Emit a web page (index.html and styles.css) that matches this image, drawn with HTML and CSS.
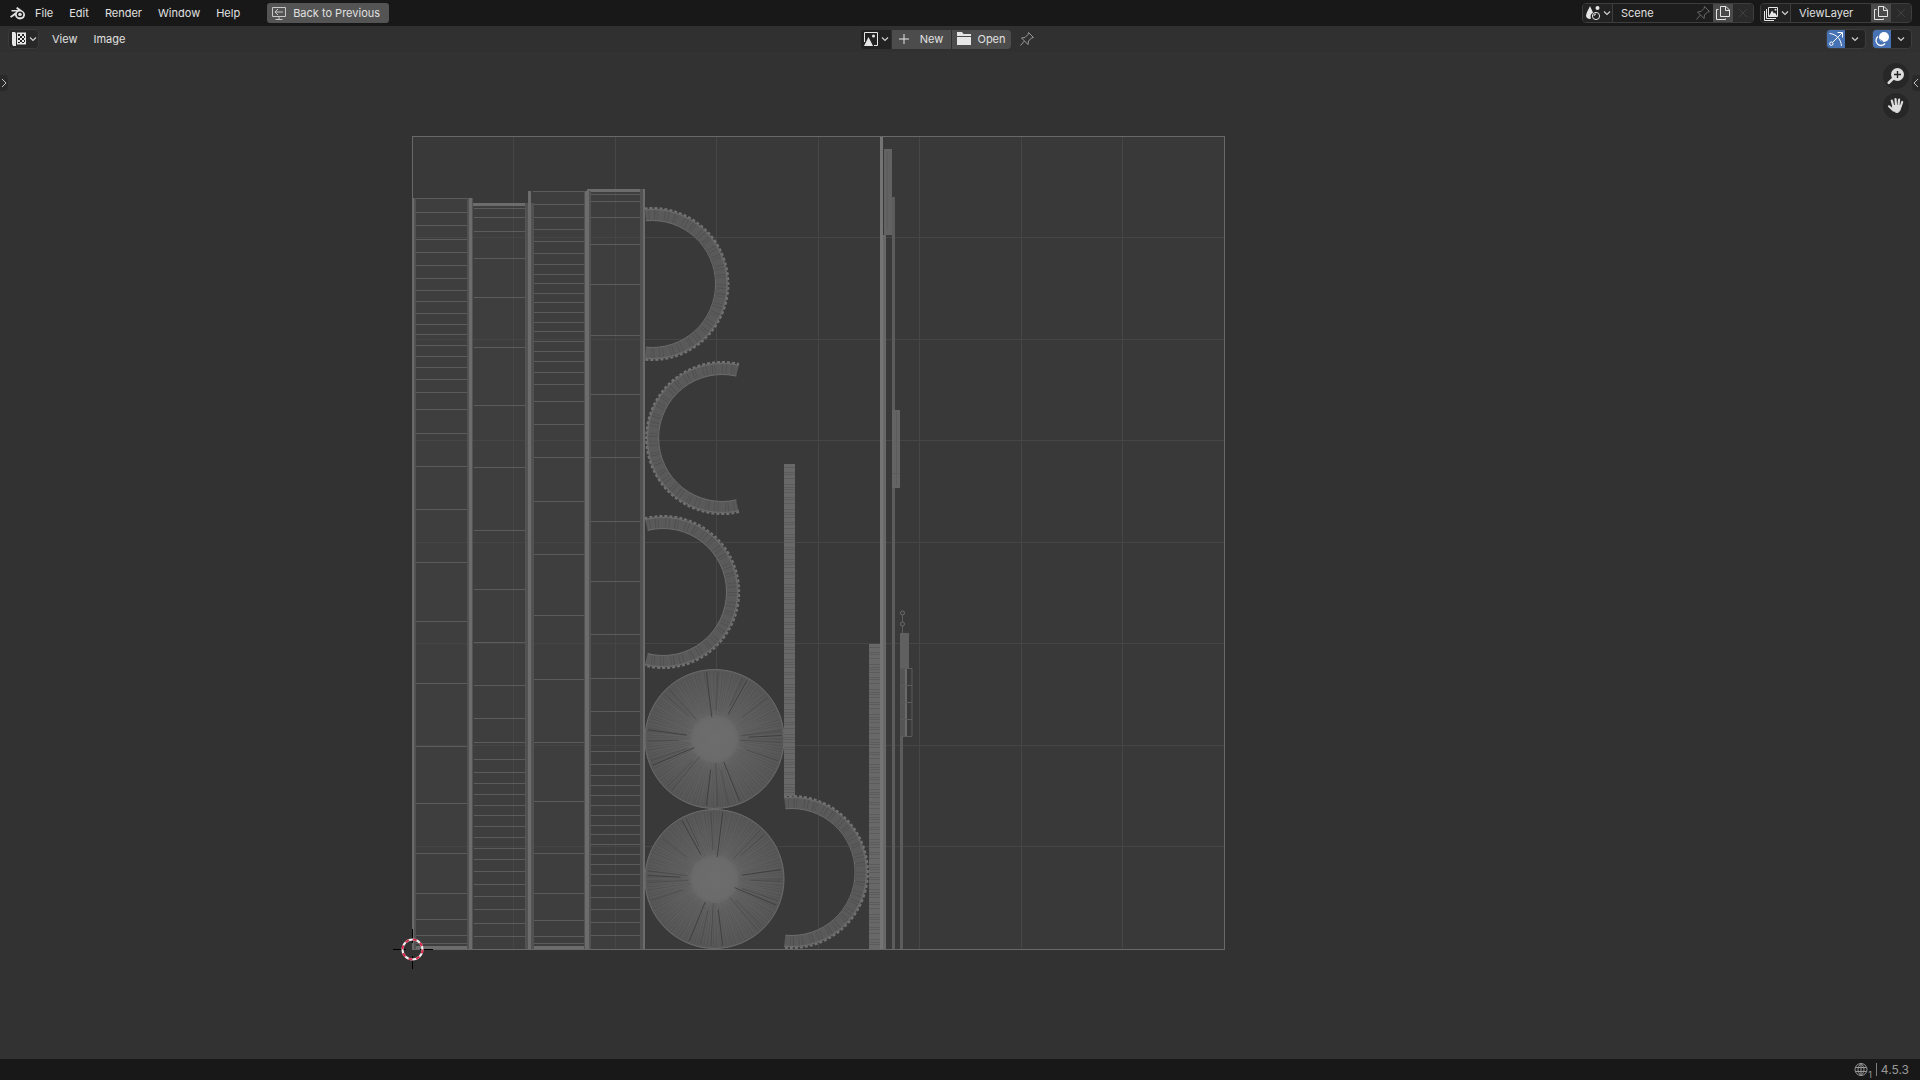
FILE: index.html
```html
<!DOCTYPE html>
<html lang="en">
  <head>
    <meta charset="UTF-8" />
    <meta name="viewport" content="width=device-width,initial-scale=1.0" />
    <title>Blender</title>
    <link rel="stylesheet" href="styles.css">
  </head>
  <body>
    <header class="topbar">
      <svg class="logo" viewBox="0 0 18 16">
        <path d="M1 11.5 7.500 6.500H2.500V5H9L7 3.200 8.300 2 14.500 6.600A5 4.600 0 1 1 6 10.200L2.200 12.800z" fill="#e0e0e0"/>
        <ellipse cx="11" cy="9.400" rx="3.200" ry="2.900" fill="#181818"/>
        <ellipse cx="11" cy="9.400" rx="1.800" ry="1.600" fill="#e0e0e0"/>
      </svg>
      <nav class="menu">
        <button>File</button>
        <button>Edit</button>
        <button>Render</button>
        <button>Window</button>
        <button>Help</button>
      </nav>
      <button class="back-button">
        <svg class="icon" viewBox="0 0 16 16">
          <path d="M1.500 2.500h13v9h-13zM8 11.500v3M4.500 14.500h7M12 7H4M7 4 4 7l3 3" fill="none" stroke="#c8c8c8"/>
        </svg>
        Back to Previous
      </button>
      <div class="topbar-right">
        <div class="id-field">
          <button class="picker" aria-label="Browse scene">
            <svg class="icon" viewBox="0 0 16 16">
              <path d="M5 1C4 4 1 7.500 1 11a3.500 3.500 0 0 0 5 2.500A5 5 0 0 1 8 7.500C7 5 5.700 3 5 1z" fill="#e6e6e6"/>
              <circle cx="12.500" cy="3" r="2" fill="#e6e6e6"/>
              <circle cx="11" cy="11" r="3.600" fill="none" stroke="#e6e6e6"/>
              <path d="M9 11a2 2 0 0 1 2-2" fill="none" stroke="#e6e6e6"/>
            </svg>
            <svg class="caret" viewBox="0 0 8 8"><path d="M1 2.500l3 3 3-3"/></svg>
          </button>
          <input class="scene-name" type="text" value="Scene" aria-label="Scene name">
          <button class="pin dim" aria-label="Pin scene">
            <svg class="icon" viewBox="0 0 16 16"><path d="M9.500 1.500l5 5-2 .5-3 3-.5 3.500L2.500 7 6 6.500l3-3zM5.500 10 1.500 14.500"/></svg>
          </button>
          <button class="copy" aria-label="New scene">
            <svg class="icon" viewBox="0 0 16 16"><path d="M5.500 1.500H11L14.500 5v6.500h-9zM10.500 1.500v4h4M3.500 4.500h-2v10h9v-1"/></svg>
          </button>
          <button class="remove" aria-label="Delete scene">
            <svg class="icon" viewBox="0 0 16 16"><path d="M4 4l8 8M12 4l-8 8"/></svg>
          </button>
        </div>
        <div class="id-field">
          <button class="picker" aria-label="Browse view layer">
            <svg class="icon" viewBox="0 0 16 16">
              <path d="M5.500 2.500h9v9h-9zM3.500 4v9.500H13M1.500 6v9.500H11" fill="none" stroke="#e6e6e6"/>
              <path d="M6 11 9 5.500l2 3 1-1 2 3.500z" fill="#e6e6e6"/>
              <circle cx="12.500" cy="4.700" r="1" fill="#e6e6e6"/>
            </svg>
            <svg class="caret" viewBox="0 0 8 8"><path d="M1 2.500l3 3 3-3"/></svg>
          </button>
          <input class="layer-name" type="text" value="ViewLayer" aria-label="View layer name">
          <button class="copy" aria-label="New view layer">
            <svg class="icon" viewBox="0 0 16 16"><path d="M5.500 1.500H11L14.500 5v6.500h-9zM10.500 1.500v4h4M3.500 4.500h-2v10h9v-1"/></svg>
          </button>
          <button class="remove" aria-label="Remove view layer">
            <svg class="icon" viewBox="0 0 16 16"><path d="M4 4l8 8M12 4l-8 8"/></svg>
          </button>
        </div>
      </div>
    </header>

    <div class="editor-header">
      <div class="header-left">
        <button class="editor-type" aria-label="Editor type">
          <svg class="icon" viewBox="0 0 16 16">
            <path d="M1 1h3l1 1.500V15l-1 0H2L1 13z" fill="#e6e6e6"/>
            <path d="M6 1.500h9v12H6z" fill="#e6e6e6"/>
            <path d="M7 3h2v2H7zM11 3h2v2h-2zM9 5h2v2H9zM13 5h1v2h-1zM7 7h2v2H7zM11 7h2v2h-2zM9 9h2v2H9zM13 9h1v2h-1zM7 11h2v1H7zM11 11h2v1h-2z" fill="#222"/>
          </svg>
          <svg class="caret" viewBox="0 0 8 8"><path d="M1 2.500l3 3 3-3"/></svg>
        </button>
        <nav class="menu">
          <button>View</button>
          <button>Image</button>
        </nav>
      </div>
      <div class="header-center">
        <div class="image-block">
          <button class="picker" aria-label="Browse image">
            <svg class="icon" viewBox="0 0 16 16">
              <path d="M8 1.500H1.500V11M11 14.500h3.500V1.500H8" fill="none" stroke="#e6e6e6"/>
              <path d="M1 15 5.500 6 10 15z" fill="#e6e6e6"/>
              <circle cx="10.500" cy="5" r="1.500" fill="#e6e6e6"/>
            </svg>
            <svg class="caret" viewBox="0 0 8 8"><path d="M1 2.500l3 3 3-3"/></svg>
          </button>
          <button class="action">
            <svg class="icon" viewBox="0 0 16 16"><path d="M8 3v10M3 8h10" stroke="#e6e6e6"/></svg>
            <span>New</span>
          </button>
          <button class="action">
            <svg class="icon" viewBox="0 0 16 16"><path d="M1 1h5l1.500 2H15v2H1zM1 6h14v8H1z" fill="#e6e6e6"/></svg>
            <span>Open</span>
          </button>
        </div>
        <button class="pin" aria-label="Pin image">
          <svg class="icon" viewBox="0 0 16 16"><path d="M9.500 1.500l5 5-2 .5-3 3-.5 3.500L2.500 7 6 6.500l3-3zM5.500 10 1.500 14.500"/></svg>
        </button>
      </div>
      <div class="header-right">
        <div class="toggle">
          <button class="toggle-on" aria-label="Show gizmos">
            <svg class="icon" viewBox="0 0 16 16" fill="none" stroke="#fff">
              <path d="M1.500 2.500C8 3 13 8 13.500 15M4.500 11.500 14 2M9.500 1.500h5v5"/>
              <circle cx="3.300" cy="12.700" r="1.700"/>
            </svg>
          </button>
          <button class="toggle-more" aria-label="Gizmo options"><svg class="caret" viewBox="0 0 8 8"><path d="M1 2.500l3 3 3-3"/></svg></button>
        </div>
        <div class="toggle">
          <button class="toggle-on" aria-label="Show overlays">
            <svg class="icon" viewBox="0 0 16 16">
              <circle cx="10" cy="6" r="5" fill="#fff"/>
              <path d="M4 5.500a5 5 0 1 0 7 7" fill="none" stroke="#fff" stroke-width="1.300"/>
              <path d="M6.500 8.500a5 5 0 0 0 2.500 2" fill="none" stroke="#4772b3"/>
            </svg>
          </button>
          <button class="toggle-more" aria-label="Overlay options"><svg class="caret" viewBox="0 0 8 8"><path d="M1 2.500l3 3 3-3"/></svg></button>
        </div>
      </div>
    </div>

    <main class="viewport">
      <svg class="uv-canvas" viewBox="0 52 1920 1007" role="img" aria-label="UV layout">
        <defs>
          <radialGradient id="fan">
            <stop offset="0" stop-color="#6d6d6d"/>
            <stop offset="0.28" stop-color="#6b6b6b"/>
            <stop offset="0.45" stop-color="#626262"/>
            <stop offset="1" stop-color="#575757"/>
          </radialGradient>
        </defs>
        <rect x="412" y="136" width="813" height="813" fill="#393939"/>
        <g id="grid"></g>
        <g id="mesh"></g>
        <rect class="bounds" x="412.500" y="136.500" width="812" height="813"/>
        <g class="cursor">
          <path d="M393 949.500h13M420 949.500h13M412.500 929v14M412.500 956v13" stroke="#000"/>
          <circle cx="412.500" cy="949.500" r="10" stroke="#f0f0f0"/>
          <circle cx="412.500" cy="949.500" r="10" stroke="#d8284a" stroke-dasharray="3.930 3.930"/>
        </g>
      </svg>
      <button class="side-tab side-left" aria-label="Show toolbar"><svg viewBox="0 0 8 12"><path d="M2 2l4 4-4 4"/></svg></button>
      <button class="side-tab side-right" aria-label="Show sidebar"><svg viewBox="0 0 8 12"><path d="M6 2 2 6l4 4"/></svg></button>
      <div class="gizmos">
        <button aria-label="Zoom">
          <svg viewBox="0 0 18 18">
            <path d="M1.800 15.800 7 10.800" stroke="#dcdcdc" stroke-width="2.600" stroke-linecap="round"/>
            <circle cx="10.500" cy="7.500" r="6.500" fill="#dcdcdc"/>
            <path d="M10.500 4v7M7 7.500h7" stroke="#222" stroke-width="1.400"/>
          </svg>
        </button>
        <button aria-label="Pan">
          <svg viewBox="0 0 18 18" fill="none" stroke="#dcdcdc" stroke-width="2.200" stroke-linecap="round">
            <path d="M6.300 9 4.800 3.600M9 8.500 8.500 2M11.500 8.500l.6-6M13.500 10l1.700-5M6.500 13.500 2 9.300"/>
            <path d="M6 8.500h7.800c0 3-.8 7-3.800 7-2 0-3-1.500-4.500-3.500z" fill="#dcdcdc" stroke-width="1"/>
          </svg>
        </button>
      </div>
    </main>

    <footer class="statusbar">
      <svg class="globe" viewBox="0 0 20 16">
        <path d="M7 1.500a6 6 0 1 0 0 12 6 6 0 1 0 0-12zM7 1.500c-4 3.500-4 8.500 0 12M7 1.500c4 3.500 4 8.500 0 12M1.500 5.500h11M1.500 9.500h11M7 1.500v12"/>
      </svg>
      <small>1</small>
      <span class="divider"></span>
      <span>4.5.3</span>
    </footer>
    <script src="script.js"></script>
  </body>
</html>
```

FILE: styles.css
```css
* {
  margin: 0;
  padding: 0;
  box-sizing: border-box;
}
body {
  font-family: "Inter", sans-serif;
  font-size: 11px;
  line-height: 16px;
  color: #e0e0e0;
  background: #303030;
  height: 100vh;
  display: flex;
  flex-direction: column;
  overflow: hidden;
}
button,
input {
  font: inherit;
  color: inherit;
  background: none;
  border: none;
}
button {
  display: flex;
  align-items: center;
  justify-content: center;
}
svg {
  display: block;
  flex: none;
}
.icon {
  width: 16px;
  height: 16px;
}
.caret {
  width: 8px;
  height: 8px;
  fill: none;
  stroke: #d0d0d0;
  stroke-width: 1.2;
}

/* top bar */
.topbar {
  height: 26px;
  background: #181818;
  display: flex;
  align-items: center;
  padding: 0 8px 0 9px;
}
.logo {
  width: 18px;
  height: 16px;
  margin-right: 8px;
}
.menu {
  display: flex;
  gap: 16px;
}
.back-button {
  height: 20px;
  margin-left: 27px;
  padding: 0 9px 0 4px;
  gap: 6px;
  border-radius: 3px;
  background: #545454;
}
.topbar-right {
  display: flex;
  gap: 6px;
  margin-left: auto;
}
.id-field {
  display: flex;
  height: 20px;
  border: 1px solid #3d3d3d;
  border-radius: 4px;
  background: #1d1d1d;
  overflow: hidden;
}
.picker {
  width: 30px;
  gap: 2px;
  background: #222;
}
.id-field .picker {
  border-right: 1px solid #3d3d3d;
}
.id-field input {
  width: 80px;
  padding-left: 8px;
  outline: none;
}
.pin svg {
  width: 16px;
  height: 16px;
  fill: none;
  stroke: #9a9a9a;
}
.pin.dim {
  width: 20px;
}
.pin.dim svg {
  stroke: #6a6a6a;
}
.copy {
  width: 20px;
  background: #4a4a4a;
}
.copy svg {
  fill: none;
  stroke: #e6e6e6;
}
.remove {
  width: 20px;
  background: #2a2a2a;
}
.remove svg {
  fill: none;
  stroke: #404040;
}

/* editor header */
.editor-header {
  height: 26px;
  background: #303030;
  display: grid;
  grid-template-columns: 1fr auto 1fr;
  align-items: center;
  padding: 0 8px;
}
.header-left,
.header-center,
.header-right,
.image-block,
.toggle {
  display: flex;
  align-items: center;
}
.editor-type {
  width: 31px;
  height: 20px;
  gap: 2px;
  margin-right: 13px;
  border: 1px solid #3a3a3a;
  border-radius: 4px;
  background: #282828;
}
.header-center {
  gap: 8px;
  padding-right: 24px;
}
.image-block {
  height: 19px;
  gap: 1px;
  border-radius: 4px;
  overflow: hidden;
}
.image-block > button {
  height: 19px;
}
.action {
  width: 59px;
  background: #4c4c4c;
  justify-content: flex-start;
  padding-left: 4px;
}
.action span {
  flex: 1;
}
.header-right {
  justify-content: flex-end;
  gap: 6px;
}
.toggle {
  height: 20px;
  border: 1px solid #3d3d3d;
  border-radius: 4px;
  background: #222;
  overflow: hidden;
}
.toggle-on {
  width: 18px;
  height: 18px;
  background: #4772b3;
}
.toggle-more {
  width: 20px;
  height: 18px;
}

/* viewport */
.viewport {
  position: relative;
  flex: 1;
  min-height: 0;
  background: #323232;
}
.uv-canvas {
  width: 100%;
  height: 100%;
}
.grid-line {
  stroke: #464646;
  fill: none;
}
.bounds {
  fill: none;
  stroke: #686868;
}
.face {
  fill: #404040;
  fill-opacity: 0.7;
}
.edge {
  fill: none;
  stroke: #5c5c5c;
}
.rail {
  fill: none;
  stroke: #525252;
}
.rail-core {
  fill: none;
  stroke: #6c6c6c;
}
.dense {
  fill: #686868;
}
.ring {
  fill: none;
  stroke: #5a5a5a;
  stroke-width: 12;
}
.ring-rim {
  fill: none;
  stroke: #6c6c6c;
}
.ring-teeth {
  fill: none;
  stroke: #727272;
  stroke-width: 2;
  stroke-dasharray: 3 2;
}
.ring-cuts {
  fill: none;
  stroke: #404040;
  stroke-width: 10;
  stroke-opacity: 0.5;
}
.spoke {
  stroke: #383838;
}
.rays {
  fill: none;
  stroke: #484848;
  stroke-opacity: 0.45;
  stroke-width: 44;
}
.cursor {
  fill: none;
}
.cursor circle {
  stroke-width: 2;
}
.side-tab {
  position: absolute;
  top: 23px;
  width: 8px;
  height: 16px;
  background: #292929;
}
.side-tab svg {
  width: 8px;
  height: 12px;
  fill: none;
  stroke: #c0c0c0;
}
.side-left {
  left: 0;
  border-radius: 0 4px 4px 0;
}
.side-right {
  right: 0;
  border-radius: 4px 0 0 4px;
}
.gizmos {
  position: absolute;
  top: 11px;
  right: 11px;
  display: flex;
  flex-direction: column;
  gap: 4px;
}
.gizmos button {
  width: 26px;
  height: 26px;
  border-radius: 50%;
  background: #272727;
}
.gizmos svg {
  width: 18px;
  height: 18px;
}

/* status bar */
.statusbar {
  height: 21px;
  background: #181818;
  display: flex;
  align-items: center;
  justify-content: flex-end;
  padding-right: 11px;
  font-size: 12px;
  color: #989898;
}
.globe {
  width: 20px;
  height: 16px;
  margin-right: -6px;
  fill: none;
  stroke: #989898;
}
.statusbar small {
  font-size: 9px;
  line-height: 10px;
  align-self: flex-end;
}
.divider {
  width: 1px;
  height: 13px;
  margin: 0 4px;
  background: #808080;
}
```

FILE: script.js
```js
const NS = 'http://www.w3.org/2000/svg';
const grid = document.getElementById('grid');
const mesh = document.getElementById('mesh');

function add(parent, tag, cls, attrs) {
  const el = document.createElementNS(NS, tag);
  el.setAttribute('class', cls);
  for (const k in attrs) el.setAttribute(k, attrs[k]);
  parent.appendChild(el);
}

// 8x8 grid
let d = '';
for (let i = 1; i < 8; i++) {
  const p = Math.floor(i * 101.5);
  d += `M${412.5 + p} 137V949M413 ${136.5 + p}H1224`;
}

// long strips: x range, top, cross edges
const strips = [
  { x: 413, r: 470, top: 198, rows: [198,212,225,239,252,265,278,290,301,313,324,334,345,356,367,379,392,409,433,466,509,562,621,683,746,803,853,893,919,935,943] },
  { x: 471, r: 529, top: 203, rows: [208,217,231,258,297,347,405,467,530,589,642,685,718,742,759,772,783,794,805,815,826,837,848,859,871,884,896,909,923,936] },
  { x: 530, r: 586, top: 191, rows: [191,204,217,229,241,253,264,274,283,293,302,312,322,331,341,351,361,372,384,401,424,457,501,554,615,679,742,801,853,893,920,936,943] },
  { x: 587, r: 645, top: 189, rows: [194,201,217,244,284,335,394,457,521,581,634,678,711,735,751,764,775,785,795,805,815,825,834,844,854,864,874,885,897,909,922,935] }
];
strips.forEach(s => {
  add(mesh, 'rect', 'face', { x: s.x, y: s.top, width: s.r - s.x, height: 949 - s.top });
});
add(mesh, 'path', 'grid-line', { d });
strips.forEach((s, i) => {
  add(mesh, 'path', 'edge', { d: s.rows.map(y => `M${s.x + 3} ${y + 0.5}H${s.r - 2}`).join('') });
  // strips 2 and 4 are capped at the top, 1 and 3 at the bottom
  const cap = i % 2 ? s.top + 1.5 : 947.5;
  add(mesh, 'path', 'rail-core', { d: `M${s.x} ${cap}H${s.r}`, 'stroke-width': 3 });
});
// shared borders: x, top, full width, bright core x and width
[
  [412, 198, 4, 412, 2], [467, 198, 6, 469, 3], [525, 203, 9, 528, 3],
  [584, 191, 7, 585, 4], [640, 189, 5, 643, 2]
].forEach(([x, y, w, cx, cw]) => {
  add(mesh, 'path', 'rail', { d: `M${x + w / 2} ${y}V949`, 'stroke-width': w });
  add(mesh, 'path', 'rail-core', { d: `M${cx + cw / 2} ${y}V949`, 'stroke-width': cw });
});
add(mesh, 'path', 'rail-core', { d: 'M529.500 191V204', 'stroke-width': 3 });

// toothed half rings: centre and start/end angle
function arc(cx, cy, r, a, b) {
  const pt = t => [cx + r * Math.cos(t * Math.PI / 180), cy + r * Math.sin(t * Math.PI / 180)].map(v => v.toFixed(1)).join(' ');
  return `M${pt(a)}A${r} ${r} 0 ${b - a > 180 ? 1 : 0} 1 ${pt(b)}`;
}
[[652.5, 284, -96, 96], [722, 438, 77, 283], [663, 592, -104, 104], [792, 872, -96, 96]].forEach(([cx, cy, a, b]) => {
  add(mesh, 'path', 'ring', { d: arc(cx, cy, 69.5, a, b) });
  add(mesh, 'path', 'ring-cuts', { d: arc(cx, cy, 69.5, a, b), 'stroke-dasharray': '.6 3 .6 5 .8 2 .5 7' });
  add(mesh, 'path', 'ring-rim', { d: arc(cx, cy, 74.5, a, b) + arc(cx, cy, 63.5, a, b) });
  add(mesh, 'path', 'ring-teeth', { d: arc(cx, cy, 76, a, b) });
});

// triangle fans
const spokes = [-97, -87, -65, -61, -38, -7, -3, 3, 19, 68, 78, 87, 97, 130, 135, 157, 161, 178, 188, 222, 227];
[739, 879].forEach((cy, n) => {
  const cx = 714.5;
  add(mesh, 'circle', 'fan', { cx, cy, r: 69.5, fill: 'url(#fan)', stroke: '#6c6c6c' });
  add(mesh, 'circle', 'rays', { cx, cy, r: 46, 'stroke-dasharray': '.5 1.3 .4 2.1 .6 1.7' });
  spokes.forEach((t, i) => {
    const a = (n ? 180 - t : t) * Math.PI / 180;
    const r0 = 22 + (i * 7) % 15;
    add(mesh, 'line', 'spoke', {
      x1: cx + r0 * Math.cos(a), y1: cy + r0 * Math.sin(a),
      x2: cx + 67 * Math.cos(a), y2: cy + 67 * Math.sin(a),
      'stroke-width': i % 3 ? 0.4 : 0.8
    });
  });
});

// narrow dense strips
[[784, 464, 11, 332], [869, 644, 12, 305]].forEach(([x, y, w, h]) => {
  add(mesh, 'rect', 'dense', { x, y, width: w, height: h });
  let cuts = '';
  for (let i = 0, p = y + 3; p < y + h - 2; i++, p += [3, 5, 2, 4, 6, 3, 2][i % 7]) cuts += `M${x} ${p + 0.5}h${w}`;
  add(mesh, 'path', 'cuts', { d: cuts, stroke: '#505050', 'stroke-opacity': 0.5 });
});
[
  [880, 137, 3, 812, '#747474'], [883, 235, 3, 714, '#686868'],
  [884, 149, 8, 86, '#626262'], [892, 197, 3, 213, '#5c5c5c'],
  [892, 410, 8, 78, '#646464'], [892, 488, 3, 461, '#5c5c5c'],
  [900, 633, 9, 35, '#606060'], [900, 668, 5, 68, '#555555'],
  [905, 668, 2, 68, '#6a6a6a'], [900, 736, 3, 213, '#5c5c5c']
].forEach(([x, y, width, height, fill]) => add(mesh, 'rect', 'bar', { x, y, width, height, fill }));
add(mesh, 'path', 'edge', { d: 'M887.500 152v78M885 165h5M896.500 412v74M892 473.500h8M901 668.500h11v68h-11M901 685.500h11M901 702.500h11M901 719.500h11M902.500 615v7M902.500 626v7' });
[613, 624].forEach(cy => add(mesh, 'circle', 'rail-core', { cx: 902.5, cy, r: 2 }));
```
